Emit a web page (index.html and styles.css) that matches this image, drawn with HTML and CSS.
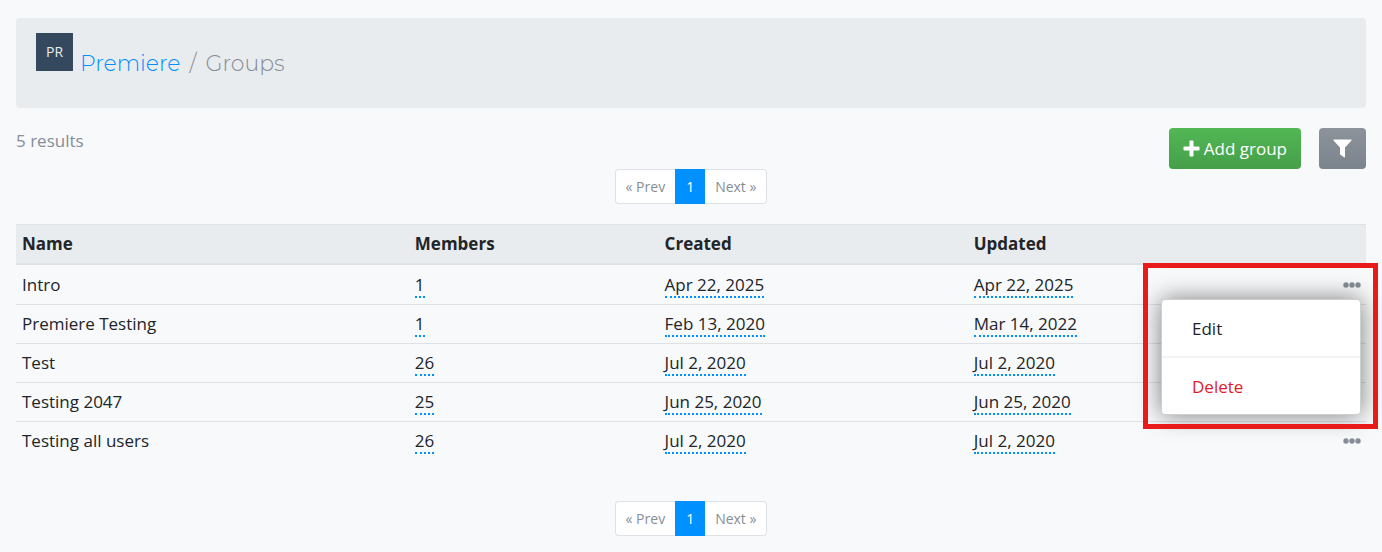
FILE: index.html
```html
<!DOCTYPE html>
<html lang="en">
<head>
    <meta charset="UTF-8">
    <meta name="viewport" content="width=device-width, initial-scale=1.0">
    <title>Premiere / Groups</title>
    <link rel="stylesheet" href="styles.css">
</head>
<body>
    <svg class="sprite" aria-hidden="true">
        <symbol id="dots" viewBox="0 0 18 6">
            <circle cx="3" cy="3" r="2.7"/>
            <circle cx="9" cy="3" r="2.7"/>
            <circle cx="15" cy="3" r="2.7"/>
        </symbol>
    </svg>

    <nav class="breadcrumb" aria-label="Breadcrumb">
        <span class="avatar">PR</span>
        <a href="#premiere">Premiere</a>
        <span class="slash">/</span>
        <span>Groups</span>
    </nav>

    <main>
        <div class="toolbar">
            <span class="results">5 results</span>
            <div class="actions">
                <button type="button" class="btn btn-success">
                    <svg width="17" height="17" viewBox="0 0 17 17" aria-hidden="true"><path d="M7.300.500h2.400q.8 0 .8.8v5.200h5.200q.8 0 .8.8v2.400q0 .8-.8.8h-5.200v5.200q0 .8-.8.8H7.300q-.8 0-.8-.8v-5.200H1.300q-.8 0-.8-.8V7.300q0-.8.8-.8h5.200V1.300q0-.8.8-.8z"/></svg>
                    Add group
                </button>
                <button type="button" class="btn btn-secondary" aria-label="Filter">
                    <svg width="19" height="19" viewBox="0 0 19 19" aria-hidden="true"><path d="M.9.500h17.200q.9.200.4 1L12 8.500v9.300q-.2.900-1 .5l-3.500-2.600q-.5-.3-.5-.8V8.500L.5 1.500Q0 .7.900.500z"/></svg>
                </button>
            </div>
        </div>

        <nav class="pagination" aria-label="Pages, top">
            <a href="#prev">« Prev</a>
            <a href="#1" class="active">1</a>
            <a href="#next">Next »</a>
        </nav>

        <table class="table">
            <thead>
                <tr>
                    <th class="col-name">Name</th>
                    <th class="col-members">Members</th>
                    <th class="col-created">Created</th>
                    <th class="col-updated">Updated</th>
                    <th></th>
                </tr>
            </thead>
            <tbody>
                <tr>
                    <td>Intro</td>
                    <td><a href="#members">1</a></td>
                    <td><abbr>Apr 22, 2025</abbr></td>
                    <td><abbr>Apr 22, 2025</abbr></td>
                    <td class="options">
                        <div class="dropdown">
                            <button type="button" class="more" aria-label="Options" aria-expanded="true"><svg><use href="#dots"/></svg></button>
                            <div class="dropdown-menu">
                                <a href="#edit">Edit</a>
                                <a href="#delete" class="danger">Delete</a>
                            </div>
                            <div class="highlight"></div>
                        </div>
                    </td>
                </tr>
                <tr>
                    <td>Premiere Testing</td>
                    <td><a href="#members">1</a></td>
                    <td><abbr>Feb 13, 2020</abbr></td>
                    <td><abbr>Mar 14, 2022</abbr></td>
                    <td class="options"><button type="button" class="more" aria-label="Options"><svg><use href="#dots"/></svg></button></td>
                </tr>
                <tr>
                    <td>Test</td>
                    <td><a href="#members">26</a></td>
                    <td><abbr>Jul 2, 2020</abbr></td>
                    <td><abbr>Jul 2, 2020</abbr></td>
                    <td class="options"><button type="button" class="more" aria-label="Options"><svg><use href="#dots"/></svg></button></td>
                </tr>
                <tr>
                    <td>Testing 2047</td>
                    <td><a href="#members">25</a></td>
                    <td><abbr>Jun 25, 2020</abbr></td>
                    <td><abbr>Jun 25, 2020</abbr></td>
                    <td class="options"><button type="button" class="more" aria-label="Options"><svg><use href="#dots"/></svg></button></td>
                </tr>
                <tr>
                    <td>Testing all users</td>
                    <td><a href="#members">26</a></td>
                    <td><abbr>Jul 2, 2020</abbr></td>
                    <td><abbr>Jul 2, 2020</abbr></td>
                    <td class="options"><button type="button" class="more" aria-label="Options"><svg><use href="#dots"/></svg></button></td>
                </tr>
            </tbody>
        </table>

        <nav class="pagination" aria-label="Pages, bottom">
            <a href="#prev">« Prev</a>
            <a href="#1" class="active">1</a>
            <a href="#next">Next »</a>
        </nav>
    </main>
</body>
</html>
```

FILE: styles.css
```css
* {
    box-sizing: border-box;
}
body {
    margin: 0;
    padding: 18px 16px 16px;
    background: #f8f9fb;
    color: #212529;
    font-family: "Segoe UI", "Open Sans", sans-serif;
    font-size: 17px;
    line-height: 26px;
}
a {
    color: inherit;
    text-decoration: none;
}
button {
    font: inherit;
    cursor: pointer;
}
.sprite {
    display: none;
}

/* breadcrumb */
.breadcrumb {
    display: flex;
    align-items: flex-start;
    gap: 7px;
    padding: 15px 20px 29px;
    border-radius: 4px;
    background: #e9ecef;
    color: #868e96;
    font-family: Montserrat, Inter, sans-serif;
    font-size: 22px;
    font-weight: 300;
    line-height: 30px;
}
.breadcrumb a,
.breadcrumb span {
    padding-top: 16px;
}
.breadcrumb a {
    color: #0090ff;
}
.breadcrumb .slash {
    padding-right: 2px;
    padding-left: 2px;
}
.breadcrumb .avatar {
    width: 37px;
    height: 38px;
    padding: 0;
    background: #34495e;
    color: #e9ecef;
    font-family: "Open Sans", sans-serif;
    font-size: 14px;
    font-weight: 400;
    line-height: 38px;
    text-align: center;
}

/* toolbar */
.toolbar {
    display: flex;
    justify-content: space-between;
    margin-top: 20px;
}
.results {
    color: #868e96;
}
.actions {
    display: flex;
    gap: 18px;
}
.btn {
    display: flex;
    align-items: center;
    gap: 4px;
    height: 41px;
    padding: 0 14px;
    border: 0;
    border-radius: 4px;
    color: #fff;
}
.btn svg {
    fill: #fff;
}
.btn-success {
    background: linear-gradient(#52b755, #459f49);
}
.btn-secondary {
    background: linear-gradient(#8c939a, #7b838c);
}

/* pagination */
.pagination {
    display: flex;
    justify-content: center;
    color: #868e96;
    font-size: 14px;
    line-height: 21px;
}
.pagination a {
    padding: 6px 10px;
    border: 1px solid #dee2e6;
    background: #fff;
}
.pagination a:first-child {
    border-right: 0;
    border-radius: 4px 0 0 4px;
}
.pagination a:last-child {
    border-left: 0;
    border-radius: 0 4px 4px 0;
}
.pagination .active {
    border-color: #0090ff;
    background: #0090ff;
    color: #fff;
}

/* table */
.table {
    width: 100%;
    margin: 20px 0 41px;
    border-collapse: separate;
    border-spacing: 0;
    table-layout: fixed;
}
.table th,
.table td {
    padding: 6px;
    border-top: 1px solid #dee2e6;
    text-align: left;
}
.table th {
    border-bottom: 2px solid #dee2e6;
    background: #e9ecef;
    font-weight: 700;
}
.table tbody tr:first-child td {
    border-top-color: transparent;
}
.col-name {
    width: 29.1%;
}
.col-members {
    width: 18.5%;
}
.col-created {
    width: 22.9%;
}
.col-updated {
    width: 17%;
}
.table td a:not(.dropdown-menu a),
.table abbr {
    border-bottom: 2px dotted #0090ff;
}
.table .options {
    padding: 6px 5px;
    text-align: right;
}
.more {
    display: block;
    margin-left: auto;
    padding: 0;
    border: 0;
    background: none;
    line-height: 26px;
}
.more svg {
    display: block;
    width: 18px;
    height: 26px;
    fill: #868e96;
}

/* row menu */
.dropdown {
    position: relative;
}
.dropdown-menu {
    position: absolute;
    top: 27px;
    right: 0;
    z-index: 1;
    width: 200px;
    border: 1px solid #cfcfcf;
    border-radius: 4px;
    background: #fff;
    box-shadow: 0 0 24px rgba(0, 0, 0, 0.5);
    text-align: left;
}
.dropdown-menu a {
    display: block;
    padding: 16px 30px 14px;
}
.dropdown-menu a + a {
    border-top: 2px solid #f1f3f5;
}
.dropdown-menu .danger {
    color: #e01e2b;
}
.highlight {
    position: absolute;
    top: -9px;
    right: -17px;
    z-index: 2;
    width: 235px;
    height: 166px;
    border: 5px solid #e81a1a;
    pointer-events: none;
}
```
